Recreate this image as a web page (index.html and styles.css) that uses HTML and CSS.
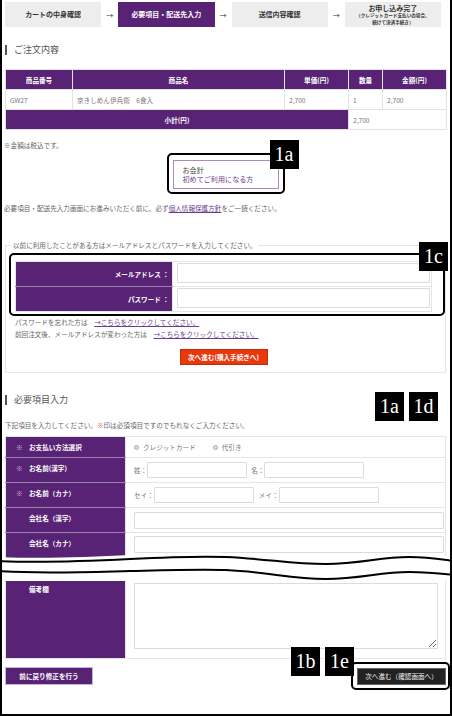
FILE: index.html
```html
<!DOCTYPE html>
<html lang="ja">
<head>
<meta charset="utf-8">
<title>必要項目・配送先入力</title>
<link rel="stylesheet" href="styles.css">
</head>
<body>
<div class="page">
  <ol class="steps">
    <li class="step">カートの中身確認</li>
    <li class="arrow">→</li>
    <li class="step is-current">必要項目・配送先入力</li>
    <li class="arrow">→</li>
    <li class="step">送信内容確認</li>
    <li class="arrow">→</li>
    <li class="step step-final"><span class="step-title">お申し込み完了</span><span class="step-note">（クレジットカード支払いの場合、</span><span class="step-note">続けて決済手続き）</span></li>
  </ol>

  <h2 class="heading heading-order">ご注文内容</h2>
  <table class="order">
    <colgroup><col class="c-code"><col class="c-name"><col class="c-price"><col class="c-qty"><col class="c-total"></colgroup>
    <tr><th>商品番号</th><th>商品名</th><th>単価(円)</th><th>数量</th><th>金額(円)</th></tr>
    <tr><td>GW27</td><td>京きしめん伊兵衛　6食入</td><td>2,700</td><td>1</td><td>2,700</td></tr>
    <tr><th colspan="3">小計(円)</th><td colspan="2">2,700</td></tr>
  </table>
  <p class="note">※金額は税込です。</p>

  <div class="first-visit">
    <div class="annot">
      <a class="btn-outline" href="#"><span class="btn-outline-main">お会計</span><span class="btn-outline-sub">初めてご利用になる方</span></a>
      <span class="callout callout-first"></span>
      <span class="tag tag-first">1a</span>
    </div>
  </div>

  <p class="privacy">必要項目・配送先入力画面にお進みいただく前に、必ず<a class="link" href="#">個人情報保護方針</a>をご一読ください。</p>

  <fieldset class="login">
    <legend>以前に利用したことがある方はメールアドレスとパスワードを入力してください。</legend>
    <div class="annot annot-block">
      <table class="login-table">
        <tr><th>メールアドレス ：</th><td><input class="field field-login" type="text"></td></tr>
        <tr><th>パスワード ：</th><td><input class="field field-login" type="password"></td></tr>
      </table>
      <span class="callout callout-login"></span>
      <span class="tag tag-login">1c</span>
    </div>
    <p class="login-links">パスワードを忘れた方は　<a class="link" href="#">→こちらをクリックしてください。</a><br>前回注文後、メールアドレスが変わった方は　<a class="link" href="#">→こちらをクリックしてください。</a></p>
    <div class="login-submit"><a class="btn btn-red" href="#">次へ進む(購入手続きへ)</a></div>
  </fieldset>

  <div class="heading-row">
    <h2 class="heading">必要項目入力</h2>
    <div class="tags-row"><span class="tag">1a</span><span class="tag">1d</span></div>
  </div>
  <p class="intro">下記項目を入力してください。<span class="req-red">※</span>印は必須項目ですのでもれなくご入力ください。</p>

  <div class="form-top">
    <table class="form">
      <colgroup><col class="c-label"><col></colgroup>
      <tr class="row-short"><th><span class="req">※</span>お支払い方法選択</th><td><span class="radio"><span class="radio-mark"></span>クレジットカード</span><span class="radio"><span class="radio-mark"></span>代引き</span></td></tr>
      <tr><th><span class="req">※</span>お名前(漢字)</th><td><span class="pre">姓：</span><input class="field field-half" type="text"><span class="pre pre-gap">名：</span><input class="field field-half" type="text"></td></tr>
      <tr><th><span class="req">※</span>お名前（カナ）</th><td><span class="pre">セイ：</span><input class="field field-half" type="text"><span class="pre pre-gap2">メイ：</span><input class="field field-half" type="text"></td></tr>
      <tr><th class="plain">会社名（漢字）</th><td><input class="field field-full" type="text"></td></tr>
      <tr class="row-cut"><th class="plain">会社名（カナ）</th><td><input class="field field-full" type="text"></td></tr>
    </table>
  </div>

  <div class="break" aria-hidden="true">
    <svg class="break-wave" viewBox="0 0 452 40" width="452" height="40">
      <path fill="#fff" d="M-2,9 C40,11 90,9 130,7 C170,5 200,4 226,5 C270,7 290,12 326,12 C360,12 380,5 409,5 C430,5 445,8 454,9 L454,31 C445,30 430,28 409,28 C380,28 360,35 326,35 C290,35 270,28 226,26 C200,25 170,26 130,27 C90,28 40,30 -2,27 Z"/>
      <path class="wave-line" d="M-2,13 C40,15 90,13 130,11 C170,9 200,8 226,9 C270,11 290,16 326,16 C360,16 380,9 409,9 C430,9 445,12 454,13"/>
      <path class="wave-line" d="M-2,23 C40,26 90,24 130,23 C170,22 200,21 226,22 C270,24 290,31 326,31 C360,31 380,24 409,24 C430,24 445,26 454,27"/>
    </svg>
  </div>

  <table class="form form-bottom">
    <colgroup><col class="c-label"><col></colgroup>
    <tr class="row-remarks"><th class="plain">備考欄</th><td><textarea class="remarks"></textarea></td></tr>
  </table>

  <div class="actions">
    <a class="btn btn-back" href="#">前に戻り修正を行う</a>
    <div class="annot">
      <a class="btn btn-next" href="#">次へ進む（確認画面へ）</a>
      <span class="callout callout-next"></span>
      <span class="tag tag-1b">1b</span>
      <span class="tag tag-1e">1e</span>
    </div>
  </div>
</div>
</body>
</html>
```

FILE: styles.css
```css
* { box-sizing: border-box; }
html, body { margin: 0; padding: 0; background: #fff; }
body {
  font-family: "Noto Sans CJK JP", "Noto Sans", sans-serif;
  font-size: 6.6px;
  color: #666;
}
.page {
  position: relative;
  width: 452px;
  height: 716px;
  border: 2px solid #000;
  border-top: 0;
  padding: 0 4px 0 3px;
  overflow: hidden;
}
a { text-decoration: none; }
.link { color: #6b3b8e; text-decoration: underline; }

/* steps */
.steps {
  display: flex;
  list-style: none;
  margin: 2px 5px 0 0;
  padding: 0;
  height: 25px;
}
.step {
  flex: 1;
  background: #ededed;
  color: #333;
  font-weight: 700;
  font-size: 7px;
  display: flex;
  flex-direction: column;
  align-items: center;
  justify-content: center;
  line-height: 9px;
}
.step.is-current { background: #582374; color: #fff; }
.step-title { font-size: 7px; line-height: 8px; }
.step-note { font-size: 4.6px; line-height: 7px; }
.arrow {
  width: 17px;
  display: flex;
  align-items: center;
  justify-content: center;
  font-size: 7px;
  color: #333;
}

/* headings */
.heading {
  margin: 0;
  font-size: 9px;
  line-height: 10px;
  font-weight: 400;
  color: #555;
  border-left: 2px solid #555;
  padding-left: 7px;
}
.heading-order { margin-top: 18px; }

/* order table */
.order {
  width: 441px;
  border-collapse: collapse;
  margin-top: 14px;
  table-layout: fixed;
}
.c-code { width: 67px; }
.c-name { width: 212px; }
.c-price { width: 64px; }
.c-qty { width: 34px; }
.c-total { width: 64px; }
.order tr { height: 20px; }
.order th {
  background: #582374;
  color: #fff;
  font-weight: 700;
  border: 1px solid #e3e3e3;
  padding: 0;
  text-align: center;
}
.order td {
  border: 1px solid #e3e3e3;
  color: #777;
  padding: 0 4px;
}

.note { margin: 10px 0 0 -1px; line-height: 10px; color: #666; }

/* first visit button */
.first-visit { display: flex; justify-content: center; margin-top: 10px; }
.annot { position: relative; }
.btn-outline {
  display: flex;
  flex-direction: column;
  width: 106px;
  height: 29px;
  border: 1px solid #a98bc0;
  padding: 5px 0 0 9px;
  font-size: 7.1px;
  line-height: 8.5px;
}
.btn-outline-main { color: #444; }
.btn-outline-sub { color: #6b3b8e; }

.callout {
  position: absolute;
  border: 2px solid #000;
  border-radius: 5px;
  pointer-events: none;
}
.callout-first { left: -6px; right: -6px; top: -7px; bottom: -5px; }
.tag {
  width: 29px;
  height: 29px;
  background: #000;
  color: #fff;
  font-family: "Liberation Serif", "DejaVu Serif", serif;
  font-size: 20px;
  line-height: 29px;
  text-align: center;
}
.annot .tag { position: absolute; }
.tag-first { left: 97px; top: -20px; }

.privacy { margin: 14px 0 0 -1px; line-height: 10px; color: #666; }

/* login */
.login {
  margin: 27px 0 0;
  border: 1px solid #e6e6e6;
  padding: 11px 13px 7px 9px;
  min-width: 0;
}
.login legend {
  padding: 0 1px;
  margin-left: -3px;
  line-height: 10px;
  color: #666;
}
.annot-block { display: block; }
.login-table { width: 417px; border-collapse: collapse; }
.login-table tr { height: 25px; }
.login-table th {
  width: 158px;
  background: #582374;
  color: #fff;
  font-weight: 700;
  text-align: right;
  padding: 0 3px 0 0;
  border: 1px solid #e6e6e6;
}
.login-table tr:first-child th { border-bottom-color: #9a84ac; }
.login-table td {
  border: 1px solid #e6e6e6;
  padding: 1px 1px 3px 4px;
}
.field {
  display: inline-block;
  vertical-align: middle;
  border: 1px solid #dcdcdc;
  border-radius: 1px;
  background: #fff;
  padding: 0;
  margin: 0;
  font: inherit;
}
.field-login { width: 253px; height: 20px; display: block; }
.callout-login { left: -6px; right: -13px; top: -8px; bottom: -4px; }
.tag-login { left: 404px; top: -19px; }

.login-links { margin: 4px 0 0; line-height: 12px; color: #666; }
.login-submit { display: flex; justify-content: center; margin-top: 9px; }
.btn {
  display: flex;
  align-items: center;
  justify-content: center;
  color: #fff;
  font-weight: 700;
}
.btn-red {
  width: 88px;
  height: 16px;
  background: #e8380d;
  border: 1px solid #c8280a;
}

/* required section */
.heading-row { position: relative; margin-top: 22px; }
.tags-row {
  position: absolute;
  right: 8px;
  top: -3px;
  display: flex;
  gap: 5px;
}
.intro { margin: 15px 0 0; line-height: 10px; color: #666; }
.req-red { color: #e8484a; }

.form-top { height: 122px; overflow: hidden; margin-top: 6px; }
.form {
  width: 441px;
  border-collapse: collapse;
  table-layout: fixed;
}
.c-label { width: 120px; }
.form tr { height: 25px; }
.form tr.row-short { height: 21px; }
.form tr.row-cut { height: 40px; }
.form tr.row-cut td { vertical-align: top; padding-top: 3px; }
.form th {
  background: #582374;
  color: #fff;
  font-weight: 700;
  text-align: left;
  vertical-align: top;
  padding: 5px 0 0 10px;
  line-height: 10px;
  border: 1px solid #e5e5e5;
  border-bottom-color: #9a84ac;
}
.form th.plain { padding-left: 23px; }
.req {
  display: inline-block;
  width: 13px;
  color: #d6bfe0;
  font-weight: 400;
}
.form td {
  border: 1px solid #e5e5e5;
  padding: 0 3px 0 8px;
  vertical-align: middle;
  color: #777;
}
.radio {
  display: inline-flex;
  align-items: center;
  gap: 4px;
  margin-right: 17px;
  color: #777;
}
.radio-mark {
  width: 5px;
  height: 5px;
  border-radius: 50%;
  border: 1px solid #aaa;
  background: #ddd;
}
.pre { display: inline-block; vertical-align: middle; color: #777; }
.pre-gap { margin-left: 4px; }
.pre-gap2 { margin-left: 5px; }
.field-half { width: 100px; height: 16px; }
.field-full { width: 310px; height: 17px; display: block; }

/* break */
.break { position: relative; z-index: 2; height: 23px; }
.break-wave { position: absolute; left: -5px; top: -10px; display: block; }
.wave-line { fill: none; stroke: #000; stroke-width: 2; }

.form-bottom .row-remarks { height: 77px; }
.form-bottom th { border-top: 0; padding-top: 3px; border-bottom-color: #e5e5e5; }
.form-bottom td { vertical-align: top; padding: 2px 9px 7px 8px; border-top: 0; }
.remarks {
  display: block;
  width: 304px;
  height: 66px;
  border: 1px solid #dcdcdc;
  margin: 0;
}

/* actions */
.actions {
  display: flex;
  justify-content: space-between;
  align-items: flex-start;
  margin-top: 8px;
}
.btn-back {
  width: 88px;
  height: 18px;
  background: #582374;
  border: 1px solid #c9b6d6;
}
.btn-next {
  width: 89px;
  height: 17px;
  margin-top: 1px;
  background: #222;
  border: 1px solid #666;
  color: #eee;
  font-weight: 400;
}
.callout-next { left: -6px; right: -4px; top: -5px; bottom: -5px; }
.tag-1b { left: -66px; top: -20px; }
.tag-1e { left: -32px; top: -20px; }
```
